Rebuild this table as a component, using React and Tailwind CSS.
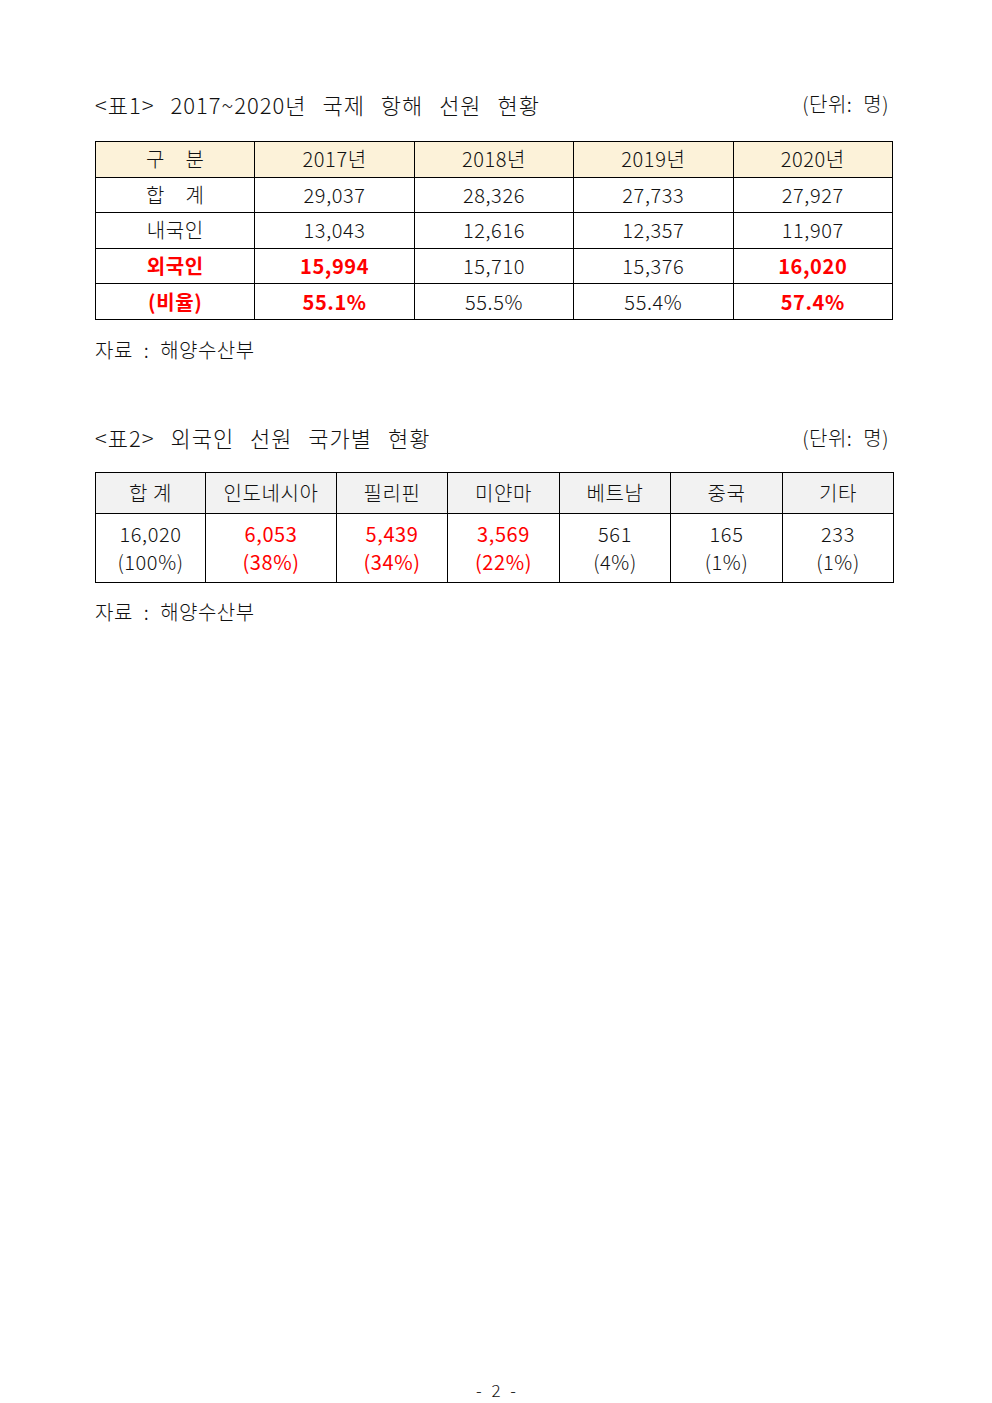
const years = ["2017년", "2018년", "2019년", "2020년"];

const rows1 = [
  { label: "합　계", values: ["29,037", "28,326", "27,733", "27,927"] },
  { label: "내국인", values: ["13,043", "12,616", "12,357", "11,907"] },
  { label: "외국인", red: true, values: ["15,994", "15,710", "15,376", "16,020"], hot: [0, 3] },
  { label: "(비율)", red: true, values: ["55.1%", "55.5%", "55.4%", "57.4%"], hot: [0, 3] },
];

const countries = [
  { name: "합 계", count: "16,020", pct: "(100%)", w: "w-[110px]" },
  { name: "인도네시아", count: "6,053", pct: "(38%)", w: "w-[131px]", red: true },
  { name: "필리핀", count: "5,439", pct: "(34%)", w: "w-[111px]", red: true },
  { name: "미얀마", count: "3,569", pct: "(22%)", w: "w-[112px]", red: true },
  { name: "베트남", count: "561", pct: "(4%)", w: "w-[111px]" },
  { name: "중국", count: "165", pct: "(1%)", w: "w-[112px]" },
  { name: "기타", count: "233", pct: "(1%)", w: "w-[111px]" },
];

function Caption({ title }) {
  return (
    <div className="flex h-[30px] items-center justify-between pr-[4px] text-[22px] font-light text-[#111]">
      <span className="tracking-[1px] [word-spacing:10px]">{title}</span>
      <span className="text-[20px] tracking-[0.5px] [word-spacing:6px]">(단위: 명)</span>
    </div>
  );
}

function Source() {
  return <p className="h-[24px] text-[20px] font-light leading-[24px] tracking-[0.5px] text-[#111] [word-spacing:6px]">자료 : 해양수산부</p>;
}

export default function App() {
  return (
    <div className="flex h-[1403px] w-[992px] flex-col bg-white font-['Noto_Sans_CJK_KR','Noto_Sans',sans-serif] text-[#111]">
      <main className="pl-[95px] pr-[99px] pt-[89px]">
        <Caption title="<표1> 2017~2020년 국제 항해 선원 현황" />
        <table className="mt-[22px] w-[798px] table-fixed border-collapse text-center text-[20px] font-light tracking-[0.6px]">
          <thead>
            <tr className="h-[35.6px] bg-[#fcf2d9]">
              <th className="border border-black font-light">구　분</th>
              {years.map((y) => <th key={y} className="border border-black font-light">{y}</th>)}
            </tr>
          </thead>
          <tbody>
            {rows1.map((r) => (
              <tr key={r.label} className="h-[35.6px]">
                <td className={`border border-black ${r.red ? "font-bold text-[#ff0000]" : ""}`}>{r.label}</td>
                {r.values.map((v, i) => (
                  <td key={i} className={`border border-black ${r.hot?.includes(i) ? "font-bold text-[#ff0000]" : ""}`}>{v}</td>
                ))}
              </tr>
            ))}
          </tbody>
        </table>
        <div className="mt-[18px]"><Source /></div>

        <div className="mt-[61px]"><Caption title="<표2> 외국인 선원 국가별 현황" /></div>
        <table className="mt-[19px] w-[798px] table-fixed border-collapse text-center text-[20px] font-light tracking-[0.6px]">
          <thead>
            <tr className="h-[41px] bg-[#f2f2f2]">
              {countries.map((c) => <th key={c.name} className={`${c.w} border border-black font-light`}>{c.name}</th>)}
            </tr>
          </thead>
          <tbody>
            <tr className="h-[69px]">
              {countries.map((c) => (
                <td key={c.name} className={`border border-black leading-[28px] ${c.red ? "font-normal text-[#ff0000]" : ""}`}>
                  <div>{c.count}</div>
                  <div>{c.pct}</div>
                </td>
              ))}
            </tr>
          </tbody>
        </table>
        <div className="mt-[17px]"><Source /></div>
      </main>
      <div className="flex-1" />
      <footer className="pb-[1px] text-center text-[17px] font-light leading-[24px] [word-spacing:6px]">- 2 -</footer>
    </div>
  );
}
